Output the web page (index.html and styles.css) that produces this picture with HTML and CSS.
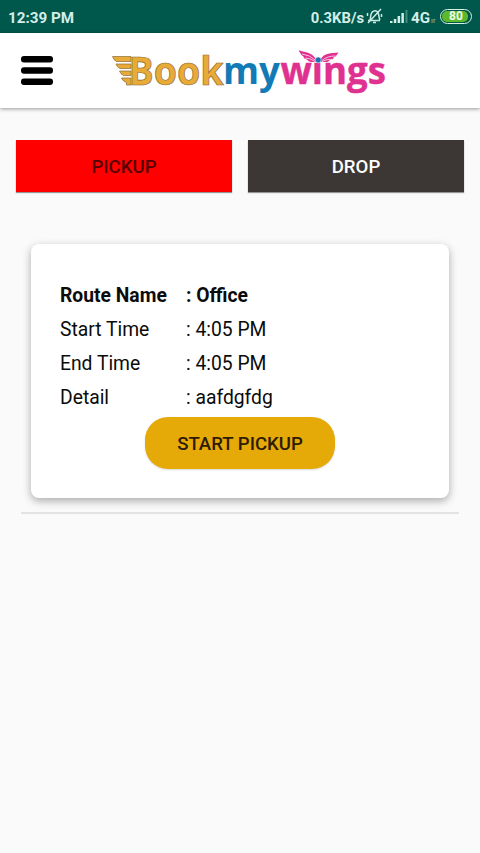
FILE: index.html
```
<!DOCTYPE html>
<html lang="en">
<head>
<meta charset="utf-8">
<title>Bookmywings</title>
<link rel="stylesheet" href="styles.css">
</head>
<body>
<div class="status">
  <span class="clock">12:39 PM</span>
  <span class="speed">0.3KB/s</span>
  <svg class="bell" width="17" height="17" viewBox="0 0 17 17" fill="none" stroke="#c9ebe3" stroke-width="1.5">
    <path d="M2 12.500H14M4 12C5 10 4 5 7 3.500Q9 2 11 3.500C13.500 5 12.500 10 14 12M7 14.500H10M2 15L15 1M1.500 5V8M15.500 6V9"/>
  </svg>
  <svg class="signal" width="18" height="14" viewBox="0 0 18 14">
    <path fill="#d3eee8" d="M0 11h2.500v2H0zM3.800 9H6.300v4H3.800zM7.600 6h2.500v7H7.600zM11.400 3h2.500v10h-2.500z"/>
    <path fill="#438a7e" d="M15.500 0h2v13h-2z"/>
  </svg>
  <span class="net">4G</span>
  <span class="roam">ır</span>
  <span class="battery"><span class="level">80</span></span>
</div>
<header class="bar">
  <svg class="menu" width="32" height="30" viewBox="0 0 32 30">
    <rect width="32" height="6.500" rx="3"/><rect y="11.300" width="32" height="6.500" rx="3"/><rect y="22.600" width="32" height="6.500" rx="3"/>
  </svg>
  <svg class="logo" width="280" height="56" viewBox="108 42 280 56">
    <g fill="#e9ab38" stroke="#8c6a35" stroke-width=".7">
      <path d="M112.500 55.500H131V60.500H116.500Q113.500 59 112.500 55.500ZM116 63H131V67.500H120Q117 66 116 63ZM119.500 70H131V74.500H123.500Q120.500 73 119.500 70ZM121.500 77H131V84H126.500V81.500Q122.500 80 121.500 77Z"/>
      <text x="128.500" y="84" font-size="39.500" textLength="95" lengthAdjust="spacingAndGlyphs">Book</text>
    </g>
    <text x="223" y="83" font-size="37" fill="#127bb5" textLength="57" lengthAdjust="spacingAndGlyphs">my</text>
    <text x="280.500" y="83" font-size="37" fill="#df3190" stroke="#df3190" stroke-width=".4" textLength="105.500" lengthAdjust="spacingAndGlyphs">wıngs</text>
    <g fill="#df3190">
      <path d="M298.500 49.300C306 52 312 51 316 58.500L315.500 61C308 61.500 308 59.500 307 58.500C304 58 303.500 56.500 303.500 55.500C300.500 54 300.500 52 298.500 49.300Z"/>
      <path d="M338.500 51.500C331 52.500 324.500 51.500 320.500 58.500L321.500 61C329 61.500 329 60 330 59C333 58.500 333.500 57.500 333.500 56.500C336.500 55.500 336.500 54 338.500 51.500Z"/>
    </g>
    <path fill="none" stroke="#fff" stroke-width=".7" d="M302 53Q310 54 315 59M305 57Q310 57 315 60.500M335.500 55Q327 55 322 59.500M332 58.300Q327 58 322 60.500"/>
    <circle cx="318.200" cy="59" r="3" fill="#1c71ad" stroke="#fff" stroke-width=".5"/>
  </svg>
</header>
<main>
  <div class="tabs">
    <button class="tab active">PICKUP</button>
    <button class="tab">DROP</button>
  </div>
  <section class="card">
    <dl class="details">
      <dt class="strong">Route Name</dt><dd class="strong">: Office</dd>
      <dt>Start Time</dt><dd>: 4:05 PM</dd>
      <dt>End Time</dt><dd>: 4:05 PM</dd>
      <dt>Detail</dt><dd>: aafdgfdg</dd>
    </dl>
    <button class="start">START PICKUP</button>
  </section>
  <hr class="divider">
</main>
</body>
</html>
```
FILE: styles.css
```
* { box-sizing: border-box; }
body {
  margin: 0;
  min-height: 853px;
  background: #fafafa;
  color: #0b0b0b;
  font-family: Roboto, sans-serif;
}
button { border: 0; padding: 0; font-family: inherit; }
svg { display: block; flex: none; }
.status {
  height: 33px;
  padding: 2px 8px 0;
  display: flex;
  align-items: center;
  background: #00574b;
  color: #d3eee8;
  font-size: 15.2px;
  font-weight: 700;
  white-space: nowrap;
}
.speed { margin-left: auto; font-size: 14.8px; }
.bell { margin-left: 2px; margin-top: -2px; }
.signal { margin-left: 7px; margin-top: -1px; }
.net { margin-left: 3px; width: 20px; }
.roam { width: 7px; font-size: 8px; font-weight: 400; padding-top: 5px; color: #8fbfb6; }
.battery {
  width: 32px;
  height: 15px;
  margin: -2px 0 0 2px;
  padding: 1px;
  border: 1.5px solid #d5f1df;
  border-radius: 8px;
}
.level {
  display: block;
  width: 26px;
  height: 11px;
  padding-left: 7px;
  border-radius: 5px;
  background: #5cb82c;
  color: #effbe8;
  font-size: 12px;
  line-height: 11px;
}
.bar {
  height: 75px;
  padding-left: 21px;
  display: flex;
  align-items: center;
  background: #fff;
  box-shadow: 0 1px 4px rgba(0, 0, 0, .4);
}
.menu { margin-top: 1px; }
.logo {
  margin-left: 55px;
  font-family: "Open Sans", sans-serif;
  font-weight: 700;
}
.tabs { display: flex; gap: 16px; padding: 32px 16px 0; }
.tab {
  flex: 1;
  height: 52px;
  padding-top: 2px;
  background: #3c3735;
  color: #fff;
  font-size: 18.6px;
  font-weight: 500;
  box-shadow: 0 1px 1px rgba(0, 0, 0, .4);
}
.tab.active { background: #f00; color: #570000; }
.card {
  width: 418px;
  height: 254px;
  margin: 52px 0 0 31px;
  padding: 35px 29px 0;
  display: flex;
  flex-direction: column;
  align-items: center;
  background: #fff;
  border-radius: 8px;
  box-shadow: 0 3px 8px rgba(0, 0, 0, .32);
}
.details {
  width: 100%;
  margin: 0;
  display: grid;
  grid-template-columns: 126px 1fr;
  grid-auto-rows: 34px;
  font-size: 19.3px;
  line-height: 34px;
}
.details dd { margin: 0; }
.strong { font-weight: 700; }
.start {
  width: 190px;
  height: 52px;
  margin-top: 2px;
  padding-top: 1px;
  border-radius: 23px;
  background: #e5a908;
  color: #2d1b04;
  font-size: 18.6px;
  font-weight: 500;
  box-shadow: 0 1px 2px rgba(0, 0, 0, .15);
}
.divider {
  height: 2px;
  margin: 14px 21px 0;
  border: 0;
  background: #e3e3e3;
}
```
